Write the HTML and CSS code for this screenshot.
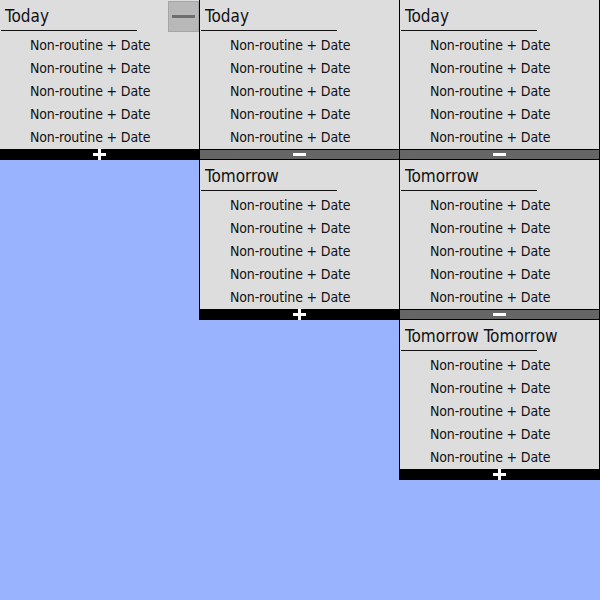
FILE: index.html
```html
<!DOCTYPE html>
<html>
<head>
<meta charset="utf-8">
<link rel="stylesheet" href="styles.css">
</head>
<body>
<div class="board">
  <div class="column">
    <div class="card">
      <div class="header">
        <span class="title">Today</span>
        <button class="minimize"><span class="dash"></span></button>
      </div>
      <div class="rule"></div>
      <ul class="list">
        <li>Non-routine + Date</li>
        <li>Non-routine + Date</li>
        <li>Non-routine + Date</li>
        <li>Non-routine + Date</li>
        <li>Non-routine + Date</li>
      </ul>
      <div class="bar collapsed"><svg width="13" height="11" viewBox="0 0 13 11"><rect x="0" y="4" width="13" height="3" fill="#fff"/><rect x="5" y="0" width="3" height="11" fill="#fff"/></svg></div>
    </div>
  </div>
  <div class="column">
    <div class="card">
      <div class="header"><span class="title">Today</span></div>
      <div class="rule"></div>
      <ul class="list">
        <li>Non-routine + Date</li>
        <li>Non-routine + Date</li>
        <li>Non-routine + Date</li>
        <li>Non-routine + Date</li>
        <li>Non-routine + Date</li>
      </ul>
      <div class="bar expanded"><span class="minus"></span></div>
    </div>
    <div class="card">
      <div class="header"><span class="title">Tomorrow</span></div>
      <div class="rule"></div>
      <ul class="list">
        <li>Non-routine + Date</li>
        <li>Non-routine + Date</li>
        <li>Non-routine + Date</li>
        <li>Non-routine + Date</li>
        <li>Non-routine + Date</li>
      </ul>
      <div class="bar collapsed"><svg width="13" height="11" viewBox="0 0 13 11"><rect x="0" y="4" width="13" height="3" fill="#fff"/><rect x="5" y="0" width="3" height="11" fill="#fff"/></svg></div>
    </div>
  </div>
  <div class="column">
    <div class="card">
      <div class="header"><span class="title">Today</span></div>
      <div class="rule"></div>
      <ul class="list">
        <li>Non-routine + Date</li>
        <li>Non-routine + Date</li>
        <li>Non-routine + Date</li>
        <li>Non-routine + Date</li>
        <li>Non-routine + Date</li>
      </ul>
      <div class="bar expanded"><span class="minus"></span></div>
    </div>
    <div class="card">
      <div class="header"><span class="title">Tomorrow</span></div>
      <div class="rule"></div>
      <ul class="list">
        <li>Non-routine + Date</li>
        <li>Non-routine + Date</li>
        <li>Non-routine + Date</li>
        <li>Non-routine + Date</li>
        <li>Non-routine + Date</li>
      </ul>
      <div class="bar expanded"><span class="minus"></span></div>
    </div>
    <div class="card">
      <div class="header"><span class="title">Tomorrow Tomorrow</span></div>
      <div class="rule"></div>
      <ul class="list">
        <li>Non-routine + Date</li>
        <li>Non-routine + Date</li>
        <li>Non-routine + Date</li>
        <li>Non-routine + Date</li>
        <li>Non-routine + Date</li>
      </ul>
      <div class="bar collapsed"><svg width="13" height="11" viewBox="0 0 13 11"><rect x="0" y="4" width="13" height="3" fill="#fff"/><rect x="5" y="0" width="3" height="11" fill="#fff"/></svg></div>
    </div>
  </div>
</div>
</body>
</html>
```
FILE: styles.css
```css
html, body {
  margin: 0;
  padding: 0;
  background: #99b3ff;
  height: 100%;
  overflow: hidden;
}

body {
  font-family: "DejaVu Sans Condensed", "DejaVu Sans", sans-serif;
  color: #111111;
}

.board {
  display: flex;
  margin-left: -1px;
  margin-top: -1px;
  align-items: flex-start;
}

.column {
  width: 200px;
  flex: 0 0 200px;
  display: flex;
  flex-direction: column;
}

.card {
  box-sizing: border-box;
  width: 201px;
  background: #dddddd;
  border: 1px solid #000;
  display: flex;
  flex-direction: column;
}

.card + .card {
  margin-top: -1px;
}

.header {
  height: 30px;
  display: flex;
  justify-content: space-between;
  align-items: flex-start;
}

.title {
  font-size: 17px;
  line-height: 29px;
  padding-top: 2px;
  padding-left: 5px;
  white-space: nowrap;
}

.minimize {
  box-sizing: border-box;
  width: 31px;
  height: 31px;
  margin-top: 1px;
  padding: 0;
  background: #b8b8b8;
  border: 1px solid #a6a6a6;
  display: flex;
  align-items: center;
  justify-content: center;
  position: relative;
  z-index: 1;
}

.dash {
  display: block;
  width: 23px;
  height: 3px;
  background: #6e6e6e;
}

.rule {
  width: 136px;
  height: 1px;
  margin-left: 1px;
  background: #111111;
}

.list {
  list-style: none;
  margin: 0;
  padding: 3px 0 0 30px;
}

.list li {
  font-size: 14px;
  letter-spacing: -0.15px;
  line-height: 23px;
  height: 23px;
  white-space: nowrap;
}

.bar {
  box-sizing: border-box;
  height: 10px;
  display: flex;
  justify-content: center;
  align-items: center;
}

.bar.collapsed {
  background: #000;
  align-items: flex-start;
  overflow: visible;
}

.bar.collapsed svg {
  display: block;
}

.bar.expanded {
  background: #666666;
  border-top: 1px solid #000;
}

.minus {
  display: block;
  width: 13px;
  height: 3px;
  background: #fff;
}
```
